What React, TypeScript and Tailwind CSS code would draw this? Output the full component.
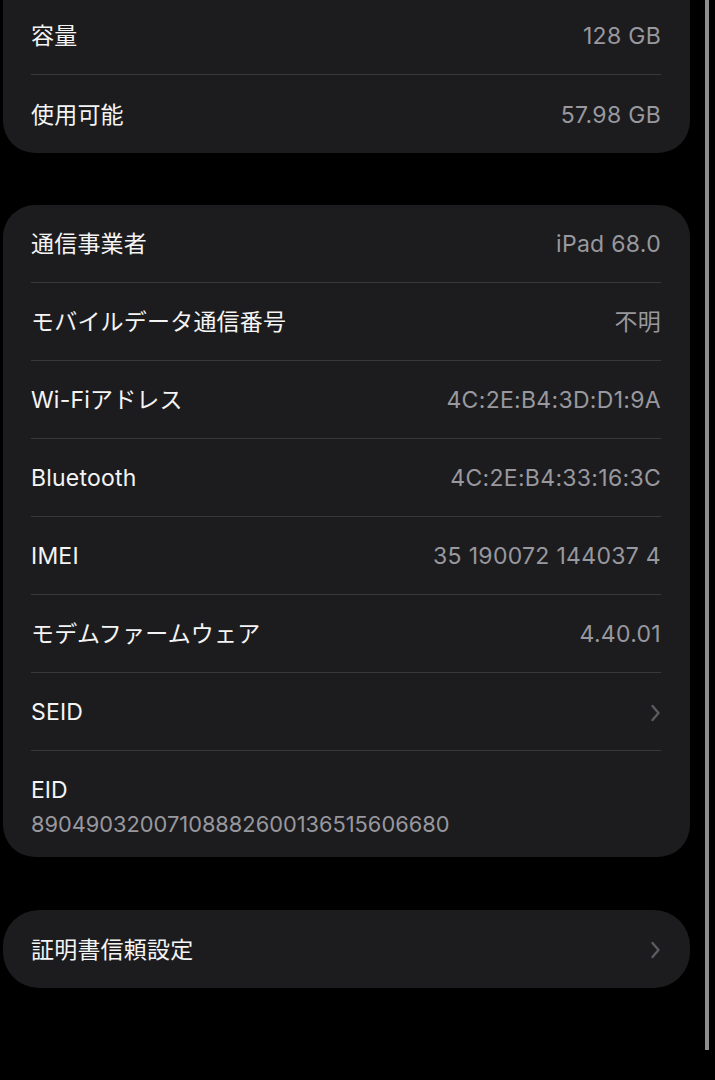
import React from 'react';

type Row = { label: string; value?: string; chevron?: boolean };

const storage: Row[] = [
  { label: '容量', value: '128 GB' },
  { label: '使用可能', value: '57.98 GB' },
];

const network: Row[] = [
  { label: '通信事業者', value: 'iPad 68.0' },
  { label: 'モバイルデータ通信番号', value: '不明' },
  { label: 'Wi-Fiアドレス', value: '4C:2E:B4:3D:D1:9A' },
  { label: 'Bluetooth', value: '4C:2E:B4:33:16:3C' },
  { label: 'IMEI', value: '35 190072 144037 4' },
  { label: 'モデムファームウェア', value: '4.40.01' },
  { label: 'SEID', chevron: true },
];

function Chevron() {
  return (
    <svg width="11" height="18" viewBox="0 0 11 18" fill="none">
      <path d="M2.5 2l6 7-6 7" stroke="#5b5b60" strokeWidth="2.4" strokeLinecap="round" strokeLinejoin="round" />
    </svg>
  );
}

function SettingRow({ row, last }: { row: Row; last?: boolean }) {
  return (
    <div className="pl-[28px] pr-[29px]">
      <div
        className={`flex h-[78px] items-center justify-between pt-[2px] ${
          last ? '' : 'border-b border-[#38383a]'
        }`}
      >
        <span className="text-[23px] tracking-[0.2px] text-[#f4f4f5]">{row.label}</span>
        {row.chevron ? (
          <Chevron />
        ) : (
          <span className="text-[23px] tracking-[0.3px] text-[#98989e]">{row.value}</span>
        )}
      </div>
    </div>
  );
}

export default function App() {
  return (
    <div
      className="flex h-[1080px] w-[715px] overflow-hidden bg-black"
      style={{ fontFamily: 'Inter, "Noto Sans CJK JP", sans-serif' }}
    >
      <div className="flex w-[705px] flex-col pl-[3px] pr-[15px]">
        {/* storage */}
        <div className="-mt-[3px] rounded-b-[32px] bg-[#1c1c1e]">
          {storage.map((r, i) => (
            <SettingRow key={r.label} row={r} last={i === storage.length - 1} />
          ))}
        </div>

        {/* network info */}
        <div className="mt-[52px] rounded-[32px] bg-[#1c1c1e]">
          {network.map(r => (
            <SettingRow key={r.label} row={r} />
          ))}
          <div className="pl-[28px] pr-[29px] pt-[25px] pb-[19px]">
            <p className="text-[23px] leading-[28px] text-[#f4f4f5]">EID</p>
            <p className="mt-[6px] text-[21.8px] leading-[28px] text-[#98989e]">
              89049032007108882600136515606680
            </p>
          </div>
        </div>

        {/* certificates */}
        <div className="mt-[53px] rounded-[36px] bg-[#1c1c1e]">
          <SettingRow row={{ label: '証明書信頼設定', chevron: true }} last />
        </div>
      </div>
      <div className="h-[1050px] w-[4px] bg-[#8e8e8e]" />
    </div>
  );
}
